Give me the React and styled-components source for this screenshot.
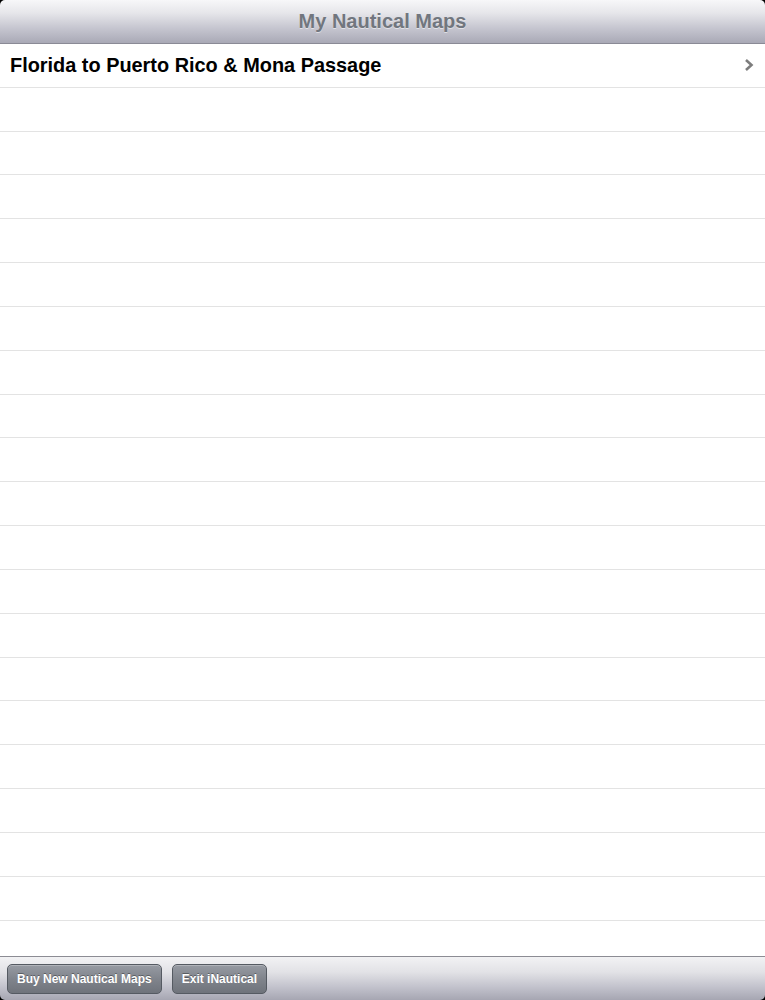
import React from "react";
import styled, { createGlobalStyle } from "styled-components";

const GlobalStyle = createGlobalStyle`
  html, body {
    margin: 0;
    padding: 0;
    background: #000;
  }
  body {
    font-family: "Liberation Sans", Arial, sans-serif;
  }
`;

const maps = ["Florida to Puerto Rico & Mona Passage"];
const EMPTY_ROWS = 20;

function Chevron() {
  return (
    <svg width="10" height="14" viewBox="0 0 10 14">
      <path d="M2 2 L7.5 7 L2 12" fill="none" stroke="#7d7d7d" strokeWidth="2.6" />
    </svg>
  );
}

function App() {
  const rows = [...maps];
  while (rows.length < EMPTY_ROWS + 1) rows.push(null);

  return (
    <Screen>
      <GlobalStyle />
      <NavBar>
        <Title>My Nautical Maps</Title>
      </NavBar>
      <List>
        {rows.map((name, i) => (
          <Row key={i}>
            {name && (
              <>
                <RowText>{name}</RowText>
                <Chevron />
              </>
            )}
          </Row>
        ))}
      </List>
      <Toolbar>
        <ToolButton>Buy New Nautical Maps</ToolButton>
        <ToolButton>Exit iNautical</ToolButton>
      </Toolbar>
    </Screen>
  );
}

const Screen = styled.div`
  width: 765px;
  height: 1000px;
  display: flex;
  flex-direction: column;
  background: #000;
  overflow: hidden;
`;

const NavBar = styled.div`
  height: 43px;
  flex: 0 0 43px;
  border-bottom: 1px solid #8a8a96;
  border-radius: 5px 5px 0 0;
  background: linear-gradient(180deg, #f7f7f9 0%, #e6e6ea 30%, #c6c6d0 65%, #a9a9b6 100%);
  display: flex;
  align-items: center;
  justify-content: center;
`;

const Title = styled.h1`
  margin: 0;
  font-size: 20px;
  font-weight: bold;
  color: #71767e;
  text-shadow: 0 1px 0 rgba(255, 255, 255, 0.5);
`;

const List = styled.div`
  flex: 1;
  background: #fff;
  overflow: hidden;
`;

const Row = styled.div`
  height: 43.84px;
  box-sizing: border-box;
  border-bottom: 1px solid #e3e3e3;
  display: flex;
  align-items: center;
  justify-content: space-between;
  padding: 0 11px 0 10px;
`;

const RowText = styled.span`
  font-size: 19.9px;
  font-weight: bold;
  color: #000;
`;

const Toolbar = styled.div`
  height: 43px;
  flex: 0 0 43px;
  border-top: 1px solid #8c8c94;
  border-radius: 0 0 5px 5px;
  background: linear-gradient(180deg, #f2f2f4 0%, #e2e2e6 35%, #c2c2cc 70%, #a6a6b2 100%);
  display: flex;
  align-items: center;
  gap: 10px;
  padding: 0 7px;
`;

const ToolButton = styled.button`
  height: 30px;
  padding: 0 9px;
  border: 1px solid #555a62;
  border-radius: 5px;
  background: linear-gradient(180deg, #979ba3 0%, #80848c 50%, #6f737b 100%);
  box-shadow: inset 0 1px 0 rgba(255, 255, 255, 0.25);
  color: #fff;
  font-family: "Liberation Sans", Arial, sans-serif;
  font-size: 12px;
  font-weight: bold;
  text-shadow: 0 -1px 0 rgba(0, 0, 0, 0.35);
`;

export default App;
